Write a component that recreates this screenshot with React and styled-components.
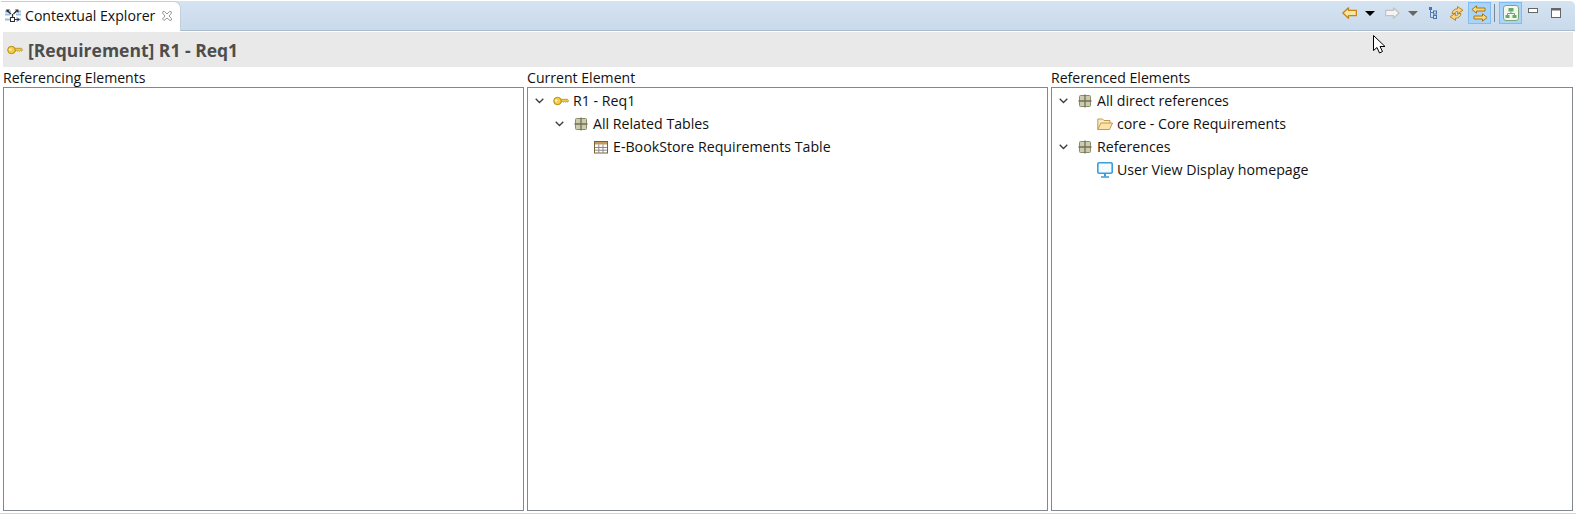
import styled, { createGlobalStyle } from 'styled-components'

const Global = createGlobalStyle`
    html, body { margin: 0; padding: 0; background: #fff; }
    body { font-family: "Open Sans", "Noto Sans", "Liberation Sans", sans-serif; }
`

function App() {
    return (
        <View>
            <Global />
            <TabBar>
                <Tab>
                    <ExplorerIcon />
                    <TabLabel>Contextual Explorer</TabLabel>
                    <CloseIcon />
                </Tab>
                <Toolbar>
                    <ToolSlot width={21}><ArrowIcon color="#fbe3a0" stroke="#c1861a" /></ToolSlot>
                    <ToolSlot width={20}><Caret color="#000" /></ToolSlot>
                    <ToolSlot width={24}><ArrowIcon dir="right" color="#f4f4f4" stroke="#c2c2c2" /></ToolSlot>
                    <ToolSlot width={17}><Caret color="#666" /></ToolSlot>
                    <ToolSlot width={23}><HierarchyIcon /></ToolSlot>
                    <ToolSlot width={24}><SyncIcon /></ToolSlot>
                    <ToolSlot width={23} active><SwapIcon /></ToolSlot>
                    <ToolSep />
                    <ToolSlot width={23} active><DiagramIcon /></ToolSlot>
                    <ToolSlot width={22}><MinimizeIcon /></ToolSlot>
                    <ToolSlot width={24}><MaximizeIcon /></ToolSlot>
                </Toolbar>
            </TabBar>
            <Content>
                <Header>
                    <KeyIcon />
                    <HeaderTitle>[Requirement] R1 - Req1</HeaderTitle>
                </Header>
                <Columns>
                    <Column>
                        <ColumnLabel>Referencing Elements</ColumnLabel>
                        <TreeBox />
                    </Column>
                    <Column>
                        <ColumnLabel>Current Element</ColumnLabel>
                        <TreeBox>
                            <TreeRow level={0}><Chevron /><KeyIcon /><RowText>R1 - Req1</RowText></TreeRow>
                            <TreeRow level={1}><Chevron /><GridIcon /><RowText>All Related Tables</RowText></TreeRow>
                            <TreeRow level={2}><ChevronGap /><TableIcon /><RowText>E-BookStore Requirements Table</RowText></TreeRow>
                        </TreeBox>
                    </Column>
                    <Column>
                        <ColumnLabel>Referenced Elements</ColumnLabel>
                        <TreeBox>
                            <TreeRow level={0}><Chevron /><GridIcon /><RowText>All direct references</RowText></TreeRow>
                            <TreeRow level={1}><ChevronGap /><FolderIcon /><RowText>core - Core Requirements</RowText></TreeRow>
                            <TreeRow level={0}><Chevron /><GridIcon /><RowText>References</RowText></TreeRow>
                            <TreeRow level={1}><ChevronGap /><MonitorIcon /><RowText>User View Display homepage</RowText></TreeRow>
                        </TreeBox>
                    </Column>
                </Columns>
            </Content>
            <Pointer />
        </View>
    )
}

export default App

function ExplorerIcon() {
    return (
        <IconSvg width="16" height="16" viewBox="0 0 16 16">
            <path d="M0 3.500h6M0 6.500h5M10 3.500h6M11 6.500h5M0 11.500h5M11 11.500h5" stroke="#9dbce2" strokeWidth="2" fill="none" />
            <path d="M2 2.500l4 3.500M12 2.500L8.500 6M7.500 6v3" stroke="#2e2e2e" strokeWidth="1.300" fill="none" />
            <path d="M1 1.500h4L2 4.500z M10 1.500h3.500V5z" fill="#2e2e2e" />
            <rect x="5.500" y="9.500" width="4" height="4" fill="#fff" stroke="#2e2e2e" />
            <path d="M10 11.500h4M12 9.500l2 2-2 2" stroke="#2e2e2e" fill="none" />
        </IconSvg>
    )
}

function CloseIcon() {
    return (
        <CloseSvg width="10" height="10" viewBox="0 0 10 10">
            <path d="M1 0.500h1.500L5 3l2.500-2.500H9L9.500 2 7 5l2.500 2.500V9L8 9.500 5 7 2 9.500 0.500 8 3 5 0.500 2z" fill="#fff" stroke="#8a8a8a" strokeWidth="0.9" />
        </CloseSvg>
    )
}

function ArrowIcon({ dir, color, stroke }) {
    return (
        <svg width="15" height="12" viewBox="0 0 15 12" style={dir === 'right' ? { transform: 'scaleX(-1)' } : undefined}>
            <path d="M6.500.800L.900 6l5.600 5.200V8.700h7.900V3.300H6.500z" fill={color} stroke={stroke} strokeWidth="1.300" strokeLinejoin="round" />
        </svg>
    )
}

function Caret({ color }) {
    return <CaretShape color={color} />
}

function HierarchyIcon() {
    return (
        <svg width="8" height="12" viewBox="0 0 8 12">
            <path d="M1.500 2v8.500h3M1.500 5.500h3" stroke="#5d7fb0" fill="none" />
            <rect x="0" y="0" width="3" height="3" fill="#4d73ad" />
            <rect x="4.500" y="4" width="3" height="3" fill="#cfdcf0" stroke="#4d73ad" />
            <rect x="4.500" y="8.500" width="3" height="3" fill="#cfdcf0" stroke="#4d73ad" />
        </svg>
    )
}

function SyncIcon() {
    const half = <path d="M3 7.500C3.300 4.500 5.500 2.800 8.500 2.800V.6l5.500 3.700-5.500 3.300V5.400C7 5.400 6 6 5.700 7.500z" fill="#f8d684" stroke="#b97a12" strokeWidth=".9" strokeLinejoin="round" />
    return (
        <svg width="15" height="15" viewBox="0 0 15 15">
            {half}
            <g transform="rotate(180 7.500 7.500)">{half}</g>
        </svg>
    )
}

function SwapIcon() {
    return (
        <svg width="17" height="17" viewBox="0 0 17 17">
            <path d="M5.500.800L.900 4.500l4.600 3.700V6h8.500V3H5.500z" fill="#f9d882" stroke="#ac7410" strokeWidth="1" strokeLinejoin="round" />
            <path d="M11.500 8.800l4.600 3.700-4.600 3.700V14H3v-3h8.500z" fill="#f9d882" stroke="#ac7410" strokeWidth="1" strokeLinejoin="round" />
        </svg>
    )
}

function DiagramIcon() {
    return (
        <svg width="16" height="16" viewBox="0 0 16 16">
            <rect x=".5" y=".5" width="15" height="15" rx="2.500" fill="#f2f8f0" stroke="#7aa77a" />
            <rect x="5.500" y="3" width="5" height="3.500" fill="#6aa96a" />
            <rect x="2.500" y="10" width="4" height="3" fill="#6aa96a" />
            <rect x="9.500" y="10" width="4" height="3" fill="#6aa96a" />
            <path d="M8 6.500V8.500M4.500 10V8.500h7V10" stroke="#6aa96a" fill="none" />
        </svg>
    )
}

function MinimizeIcon() {
    return (
        <WindowSvg width="10" height="5" viewBox="0 0 10 5">
            <rect x=".5" y=".5" width="9" height="4" fill="#fff" stroke="#666" />
        </WindowSvg>
    )
}

function MaximizeIcon() {
    return (
        <svg width="10" height="10" viewBox="0 0 10 10">
            <rect x=".5" y=".5" width="9" height="9" fill="#fff" stroke="#666" />
            <path d="M1 1.500h8" stroke="#666" strokeWidth="2" />
        </svg>
    )
}

function KeyIcon() {
    return (
        <IconSvg width="16" height="16" viewBox="0 0 16 16">
            <path d="M7 6.300h7.500l1 1.600-1 1.300-1-.8-1 .8-1-.8-1 .8-1-.8-1.500.8z" fill="#f3cd4c" stroke="#b58a12" strokeWidth=".8" />
            <ellipse cx="4.500" cy="8" rx="3.800" ry="3.700" fill="#f5cf4a" stroke="#b58a12" />
            <ellipse cx="3.200" cy="7.500" rx="1.300" ry="1.100" fill="#fff6c6" />
        </IconSvg>
    )
}

function GridIcon() {
    return (
        <IconSvg width="16" height="16" viewBox="0 0 16 16">
            <rect x="2.500" y="2.500" width="11" height="11" rx="1" fill="#cdcbae" stroke="#8c8c6c" />
            <path d="M8 1.500v13M1.500 8h13" stroke="#6f7058" strokeWidth="1.300" />
        </IconSvg>
    )
}

function TableIcon() {
    return (
        <IconSvg width="16" height="16" viewBox="0 0 16 16">
            <rect x="1.500" y="2.500" width="13" height="11.500" fill="#fff" stroke="#7d6238" />
            <rect x="2" y="3" width="12" height="2.500" fill="#c49a5c" />
            <path d="M2 8.500h12M2 11.200h12M5.800 5.500V14M10 5.500V14" stroke="#8a8a8a" />
        </IconSvg>
    )
}

function FolderIcon() {
    return (
        <IconSvg width="16" height="16" viewBox="0 0 16 16">
            <path d="M.8 13.500V3h4.700l1.500 1.500h6v3" fill="#fdeac0" stroke="#c09a52" />
            <path d="M.8 13.500l3-6.500h11.700l-3 6.500z" fill="#fde3a8" stroke="#c09a52" />
        </IconSvg>
    )
}

function MonitorIcon() {
    return (
        <IconSvg width="16" height="16" viewBox="0 0 16 16">
            <rect x=".8" y=".8" width="14.400" height="10.400" rx="1.200" fill="#f4fafe" stroke="#3a9ddb" strokeWidth="1.600" />
            <path d="M8 11.500v3" stroke="#3a9ddb" strokeWidth="2" />
            <path d="M4 15h8" stroke="#3a9ddb" strokeWidth="1.500" />
        </IconSvg>
    )
}

function Chevron() {
    return (
        <ChevronSvg width="9" height="6" viewBox="0 0 9 6">
            <path d="M.7.700L4.500 4.500 8.300.700" fill="none" stroke="#3d3d3d" strokeWidth="1.300" />
        </ChevronSvg>
    )
}

function Pointer() {
    return (
        <PointerSvg width="14" height="20" viewBox="0 0 14 20">
            <path d="M.5.500v15l3.500-3 2.500 5.500 3-1.500-2.500-5 5 0z" fill="#fff" stroke="#000" />
        </PointerSvg>
    )
}

const View = styled.div`
    position: relative;
    width: 1576px;
    height: 514px;
    overflow: hidden;
    display: flex;
    flex-direction: column;
    background: #fff;
    box-sizing: border-box;
    border-bottom: 1px solid #d4d4d4;
`
const TabBar = styled.div`
    height: 30px;
    flex: none;
    display: flex;
    justify-content: space-between;
    margin: 1px 1px 0;
    border-radius: 5px 5px 0 0;
    box-sizing: border-box;
    background: linear-gradient(#d5e3f1, #c9daeb);
    border-bottom: 1px solid #a9bbcf;
`
const Tab = styled.div`
    width: 180px;
    height: 30px;
    box-sizing: border-box;
    display: flex;
    align-items: center;
    padding: 0 0 2px 4px;
    background: #fff;
    border: 1px solid #c3cfdb;
    border-bottom: none;
    border-left: none;
    border-radius: 0 7px 0 0;
`
const TabLabel = styled.span`
    margin-left: 4px;
    font-size: 14.1px;
    color: #111;
    white-space: nowrap;
`
const Toolbar = styled.div`
    display: flex;
    align-items: flex-start;
    padding: 1px 7px 0 0;
`
const ToolSlot = styled.div`
    width: ${props => props.width}px;
    height: 22px;
    box-sizing: border-box;
    display: flex;
    align-items: center;
    justify-content: center;
    background: ${props => props.active ? '#a9d4f8' : 'transparent'};
    border: 1px solid ${props => props.active ? '#7ebcf3' : 'transparent'};
`
const ToolSep = styled.div`
    width: 1px;
    height: 18px;
    margin: 2px 4px 0 3px;
    background: #7a8794;
`
const CaretShape = styled.div`
    width: 0;
    height: 0;
    border-left: 5px solid transparent;
    border-right: 5px solid transparent;
    border-top: 5px solid ${props => props.color};
`
const Content = styled.div`
    flex: 1;
    min-height: 0;
    display: flex;
    flex-direction: column;
    padding: 1px 3px 2px;
`
const Header = styled.div`
    height: 35px;
    flex: none;
    display: flex;
    align-items: center;
    padding-left: 4px;
    background: #e9e9e9;
`
const HeaderTitle = styled.div`
    margin: 1px 0 0 5px;
    font-size: 17.5px;
    font-weight: 700;
    color: #4d4d4d;
    white-space: nowrap;
`
const Columns = styled.div`
    flex: 1;
    min-height: 0;
    display: grid;
    grid-template-columns: 521px 521px 1fr;
    column-gap: 3px;
`
const Column = styled.div`
    display: flex;
    flex-direction: column;
    min-height: 0;
`
const ColumnLabel = styled.div`
    height: 20px;
    flex: none;
    font-size: 14.1px;
    line-height: 21px;
    color: #111;
    white-space: nowrap;
`
const TreeBox = styled.div`
    flex: 1;
    min-height: 0;
    box-sizing: border-box;
    border: 1px solid #828790;
    padding-top: 1px;
    background: #fff;
`
const TreeRow = styled.div`
    height: 23px;
    display: flex;
    align-items: center;
    padding-left: ${props => 7 + props.level * 20}px;
`
const ChevronSvg = styled.svg`
    flex: none;
    margin-right: 9px;
`
const ChevronGap = styled.span`
    flex: none;
    width: 18px;
`
const RowText = styled.span`
    margin-left: 4px;
    font-size: 14.2px;
    color: #111;
    white-space: nowrap;
`
const IconSvg = styled.svg`
    flex: none;
`
const CloseSvg = styled.svg`
    flex: none;
    margin-left: 7px;
`
const WindowSvg = styled.svg`
    margin-bottom: 5px;
`
const PointerSvg = styled.svg`
    position: absolute;
    left: 1373px;
    top: 35px;
`
